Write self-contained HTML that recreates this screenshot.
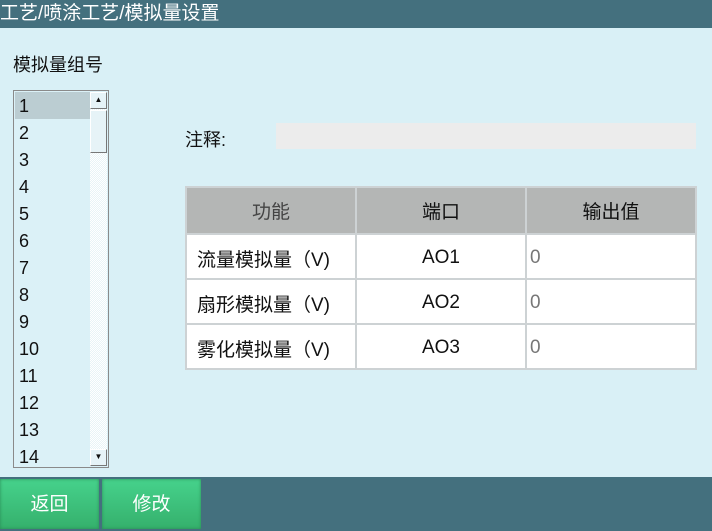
<!DOCTYPE html>
<html><head><meta charset="utf-8"><style>
*{margin:0;padding:0;box-sizing:border-box}
body{width:712px;height:531px;overflow:hidden;background:#d9f0f6;font-family:"Liberation Sans","Noto Sans CJK SC",sans-serif;position:relative;color:#111}
.title{position:absolute;left:0;top:0;width:712px;height:28px;background:#44707e;color:#fff;font-size:19px;line-height:28px;padding-left:0}
.abs{position:absolute}
.list{left:13px;top:90px;width:96px;height:378px;border:1px solid #8a8a8a;background:#dbf1f7;overflow:hidden}
.item{position:absolute;left:1px;width:75px;height:27px;font-size:18px;line-height:29px;padding-left:4px}
.sb{position:absolute;left:76px;top:1px;width:17px;height:374px;background:repeating-conic-gradient(#e8f4f7 0 25%,#fff 0 50%) 0 0/2px 2px}
.btn{position:absolute;left:0;width:17px;background:#e6f3f7;border:1px solid;border-color:#fff #777 #777 #fff}
table{position:absolute;left:185px;top:186px;border-collapse:collapse;font-size:19px;table-layout:fixed;width:512px}
td{border:2px solid #cdd2d4;height:45px;text-align:center;background:#fff;padding-top:3px}
th{border:2px solid #cdd2d4;height:47px;background:#b4b6b5;font-weight:normal;color:#111}
.bottom{position:absolute;left:0;top:477px;width:712px;height:54px;background:#44707e}
.gb{position:absolute;top:479px;width:99px;height:50px;background:linear-gradient(#46d28c,#35b06c);color:#fff;font-size:19px;line-height:52px;text-align:center;box-shadow:inset 0 0 3px #2a8a55}
</style></head><body>
<div class="title">工艺/喷涂工艺/模拟量设置</div>
<div class="abs" style="left:13px;top:51px;font-size:18px">模拟量组号</div>
<div class="abs list">
<div class="item" style="top:1px;background:#bbcdd2">1</div>
<div class="item" style="top:28px">2</div>
<div class="item" style="top:55px">3</div>
<div class="item" style="top:82px">4</div>
<div class="item" style="top:109px">5</div>
<div class="item" style="top:136px">6</div>
<div class="item" style="top:163px">7</div>
<div class="item" style="top:190px">8</div>
<div class="item" style="top:217px">9</div>
<div class="item" style="top:244px">10</div>
<div class="item" style="top:271px">11</div>
<div class="item" style="top:298px">12</div>
<div class="item" style="top:325px">13</div>
<div class="item" style="top:352px">14</div>
<div class="sb">
<div class="btn" style="top:0;height:17px;font-size:8px;line-height:14px;text-align:center">▲</div>
<div class="btn" style="top:18px;height:43px"></div>
<div class="btn" style="top:357px;height:17px;font-size:8px;line-height:14px;text-align:center">▼</div>
</div>
</div>
<div class="abs" style="left:185px;top:126px;font-size:18px">注释:</div>
<div class="abs" style="left:276px;top:123px;width:420px;height:26px;background:#ececec"></div>
<table>
<tr><th style="color:#444">功能</th><th>端口</th><th>输出值</th></tr>
<tr><td style="text-align:left;padding-left:10px">流量模拟量（V)</td><td>AO1</td><td style="text-align:left;padding-left:3px;color:#777">0</td></tr>
<tr><td style="text-align:left;padding-left:10px">扇形模拟量（V)</td><td>AO2</td><td style="text-align:left;padding-left:3px;color:#777">0</td></tr>
<tr><td style="text-align:left;padding-left:10px">雾化模拟量（V)</td><td>AO3</td><td style="text-align:left;padding-left:3px;color:#777">0</td></tr>
</table>
<div class="bottom"></div>
<div class="gb" style="left:0">返回</div>
<div class="gb" style="left:102px">修改</div>
</body></html>
